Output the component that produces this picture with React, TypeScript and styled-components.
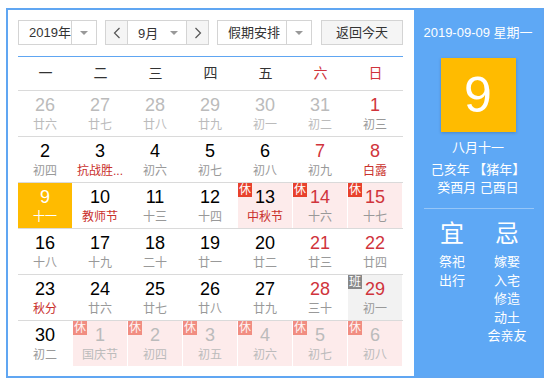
import React from "react";
import styled, { createGlobalStyle } from "styled-components";

type Day = {
  n: number;
  l: string;
  other?: boolean;
  red?: boolean;
  fest?: boolean;
  today?: boolean;
  tag?: "休" | "班";
};

const weeks: Day[][] = [
  [
    { n: 26, l: "廿六", other: true },
    { n: 27, l: "廿七", other: true },
    { n: 28, l: "廿八", other: true },
    { n: 29, l: "廿九", other: true },
    { n: 30, l: "初一", other: true },
    { n: 31, l: "初二", other: true },
    { n: 1, l: "初三", red: true },
  ],
  [
    { n: 2, l: "初四" },
    { n: 3, l: "抗战胜...", fest: true },
    { n: 4, l: "初六" },
    { n: 5, l: "初七" },
    { n: 6, l: "初八" },
    { n: 7, l: "初九", red: true },
    { n: 8, l: "白露", red: true, fest: true },
  ],
  [
    { n: 9, l: "十一", today: true },
    { n: 10, l: "教师节", fest: true },
    { n: 11, l: "十三" },
    { n: 12, l: "十四" },
    { n: 13, l: "中秋节", fest: true, tag: "休" },
    { n: 14, l: "十六", red: true, tag: "休" },
    { n: 15, l: "十七", red: true, tag: "休" },
  ],
  [
    { n: 16, l: "十八" },
    { n: 17, l: "十九" },
    { n: 18, l: "二十" },
    { n: 19, l: "廿一" },
    { n: 20, l: "廿二" },
    { n: 21, l: "廿三", red: true },
    { n: 22, l: "廿四", red: true },
  ],
  [
    { n: 23, l: "秋分", fest: true },
    { n: 24, l: "廿六" },
    { n: 25, l: "廿七" },
    { n: 26, l: "廿八" },
    { n: 27, l: "廿九" },
    { n: 28, l: "三十", red: true },
    { n: 29, l: "初一", red: true, tag: "班" },
  ],
  [
    { n: 30, l: "初二" },
    { n: 1, l: "国庆节", other: true, tag: "休" },
    { n: 2, l: "初四", other: true, tag: "休" },
    { n: 3, l: "初五", other: true, tag: "休" },
    { n: 4, l: "初六", other: true, tag: "休" },
    { n: 5, l: "初七", other: true, tag: "休" },
    { n: 6, l: "初八", other: true, tag: "休" },
  ],
];

const weekNames = ["一", "二", "三", "四", "五", "六", "日"];

const Chevron = ({ dir }: { dir: "l" | "r" }) => (
  <svg width="8" height="12" viewBox="0 0 8 12">
    <path
      d={dir === "l" ? "M6.5 1 L1.5 6 L6.5 11" : "M1.5 1 L6.5 6 L1.5 11"}
      fill="none"
      stroke="#555"
      strokeWidth="1.2"
    />
  </svg>
);

export default function App() {
  return (
    <>
      <Global />
      <Frame>
        <Left>
          <Toolbar>
            <Select w={79}>
              <SelectText>2019年</SelectText>
              <ArrowBox>
                <Caret />
              </ArrowBox>
            </Select>
            <MonthGroup>
              <NavBtn side="l">
                <Chevron dir="l" />
              </NavBtn>
              <MonthSel>
                <span>9月</span>
                <Caret />
              </MonthSel>
              <NavBtn side="r">
                <Chevron dir="r" />
              </NavBtn>
            </MonthGroup>
            <Select w={95}>
              <SelectText>假期安排</SelectText>
              <ArrowBox>
                <Caret />
              </ArrowBox>
            </Select>
            <TodayBtn>返回今天</TodayBtn>
          </Toolbar>
          <BlueLine />
          <Head>
            {weekNames.map((w, i) => (
              <HeadCell key={w} weekend={i > 4}>
                {w}
              </HeadCell>
            ))}
          </Head>
          {weeks.map((row, ri) => (
            <Row key={ri} last={ri === weeks.length - 1}>
              {row.map((d, ci) => (
                <Cell key={ci} today={d.today} tag={d.tag}>
                  {d.tag && (
                    <Badge kind={d.tag} faded={d.other}>
                      {d.tag}
                    </Badge>
                  )}
                  <Num today={d.today} other={d.other} red={d.red}>
                    {d.n}
                  </Num>
                  <Lunar today={d.today} other={d.other} fest={d.fest}>
                    {d.l}
                  </Lunar>
                </Cell>
              ))}
            </Row>
          ))}
        </Left>
        <Right>
          <DateLine>2019-09-09 星期一</DateLine>
          <BigDay>9</BigDay>
          <InfoLine first>八月十一</InfoLine>
          <InfoLine>己亥年 【猪年】</InfoLine>
          <InfoLine>癸酉月 己酉日</InfoLine>
          <Divider />
          <Advice>
            <AdviceCol>
              <AdviceHead>宜</AdviceHead>
              <AdviceItem>祭祀</AdviceItem>
              <AdviceItem>出行</AdviceItem>
            </AdviceCol>
            <AdviceCol>
              <AdviceHead>忌</AdviceHead>
              <AdviceItem>嫁娶</AdviceItem>
              <AdviceItem>入宅</AdviceItem>
              <AdviceItem>修造</AdviceItem>
              <AdviceItem>动土</AdviceItem>
              <AdviceItem>会亲友</AdviceItem>
            </AdviceCol>
          </Advice>
        </Right>
      </Frame>
    </>
  );
}

const Global = createGlobalStyle`
  body {
    margin: 0;
    background: #fff;
    font-family: "Liberation Sans", "Noto Sans CJK SC", sans-serif;
  }
`;

const Frame = styled.div`
  margin: 8px 0 0 6px;
  width: 538px;
  height: 370px;
  box-sizing: border-box;
  border: 2px solid #60a6f2;
  display: flex;
`;

const Left = styled.div`
  width: 406px;
  padding: 10px 0 0 10px;
  box-sizing: border-box;
  background: #fff;
`;

const Toolbar = styled.div`
  display: flex;
  height: 25px;
  gap: 8px;
  font-size: 13px;
  color: #333;
`;

const Select = styled.div<{ w: number }>`
  width: ${(p) => p.w}px;
  height: 25px;
  box-sizing: border-box;
  border: 1px solid #d4d4d4;
  display: flex;
  background: #fff;
`;

const SelectText = styled.div`
  flex: 1;
  padding-left: 10px;
  line-height: 23px;
`;

const ArrowBox = styled.div`
  width: 24px;
  border-left: 1px solid #d4d4d4;
  display: flex;
  align-items: center;
  justify-content: center;
`;

const Caret = styled.span`
  width: 0;
  height: 0;
  border-left: 4px solid transparent;
  border-right: 4px solid transparent;
  border-top: 4px solid #999;
`;

const MonthGroup = styled.div`
  width: 104px;
  height: 25px;
  box-sizing: border-box;
  border: 1px solid #d4d4d4;
  display: flex;
`;

const NavBtn = styled.div<{ side: "l" | "r" }>`
  width: 21px;
  background: #f5f5f5;
  display: flex;
  align-items: center;
  justify-content: center;
  ${(p) =>
    p.side === "l" ? "border-right: 1px solid #d4d4d4;" : "border-left: 1px solid #d4d4d4;"}
`;

const MonthSel = styled.div`
  flex: 1;
  display: flex;
  align-items: center;
  justify-content: space-between;
  padding: 0 8px 0 10px;
  background: #fff;
`;

const TodayBtn = styled.div`
  width: 82px;
  height: 25px;
  box-sizing: border-box;
  margin-left: 1px;
  border: 1px solid #d4d4d4;
  background: #f5f5f5;
  text-align: center;
  line-height: 23px;
`;

const BlueLine = styled.div`
  width: 385px;
  height: 1px;
  margin-top: 11px;
  background: #60a6f2;
`;

const Head = styled.div`
  display: grid;
  grid-template-columns: repeat(7, 55px);
  width: 385px;
  height: 33px;
  border-bottom: 1px solid #dadada;
`;

const HeadCell = styled.div<{ weekend?: boolean }>`
  text-align: center;
  line-height: 32px;
  font-size: 14px;
  color: ${(p) => (p.weekend ? "#d0343c" : "#333")};
`;

const Row = styled.div<{ last?: boolean }>`
  display: grid;
  grid-template-columns: repeat(7, 55px);
  width: 385px;
  height: 45px;
  border-bottom: 1px solid ${(p) => (p.last ? "transparent" : "#dadada")};
`;

const Cell = styled.div<{ today?: boolean; tag?: string }>`
  position: relative;
  width: 54px;
  height: 45px;
  text-align: center;
  background: ${(p) =>
    p.today ? "#ffbb00" : p.tag === "休" ? "#fdebeb" : p.tag === "班" ? "#f2f2f2" : "transparent"};
`;

const Badge = styled.span<{ kind: string; faded?: boolean }>`
  position: absolute;
  left: 0;
  top: 0;
  width: 14px;
  height: 14px;
  line-height: 14px;
  font-size: 12px;
  color: #fff;
  background: ${(p) => (p.kind === "休" ? "#e8412c" : "#888")};
  opacity: ${(p) => (p.faded ? 0.55 : 1)};
`;

const Num = styled.div<{ today?: boolean; other?: boolean; red?: boolean }>`
  padding-top: 4px;
  font-size: 18px;
  line-height: 20px;
  color: ${(p) => (p.today ? "#fff" : p.other ? "#bbb" : p.red ? "#d0343c" : "#000")};
`;

const Lunar = styled.div<{ today?: boolean; other?: boolean; fest?: boolean }>`
  margin-top: 2px;
  font-size: 12px;
  line-height: 16px;
  white-space: nowrap;
  overflow: hidden;
  color: ${(p) => (p.today ? "#fff" : p.other ? "#bbb" : p.fest ? "#c9302c" : "#999")};
`;

const Right = styled.div`
  flex: 1;
  background: #5ea8f5;
  color: #fff;
  text-align: center;
  padding-top: 13px;
`;

const DateLine = styled.div`
  font-size: 13px;
  line-height: 20px;
`;

const BigDay = styled.div`
  width: 75px;
  height: 74px;
  margin: 15px auto 0;
  background: #ffbb00;
  font-size: 50px;
  line-height: 74px;
  box-shadow: 0 1px 3px rgba(0, 0, 0, 0.2);
`;

const InfoLine = styled.div<{ first?: boolean }>`
  font-size: 13px;
  line-height: 18px;
  margin-top: ${(p) => (p.first ? 7 : 0)}px;
  margin-bottom: ${(p) => (p.first ? 4 : 0)}px;
`;

const Divider = styled.div`
  width: 110px;
  height: 1px;
  margin: 11px auto 0 10px;
  background: rgba(255, 255, 255, 0.35);
`;

const Advice = styled.div`
  display: flex;
  gap: 15px;
  padding-left: 18px;
  margin-top: 10px;
`;

const AdviceCol = styled.div`
  width: 40px;
  text-align: center;
`;

const AdviceHead = styled.div`
  font-size: 24px;
  line-height: 30px;
  margin-bottom: 4px;
`;

const AdviceItem = styled.div`
  font-size: 13px;
  line-height: 18.5px;
`;
